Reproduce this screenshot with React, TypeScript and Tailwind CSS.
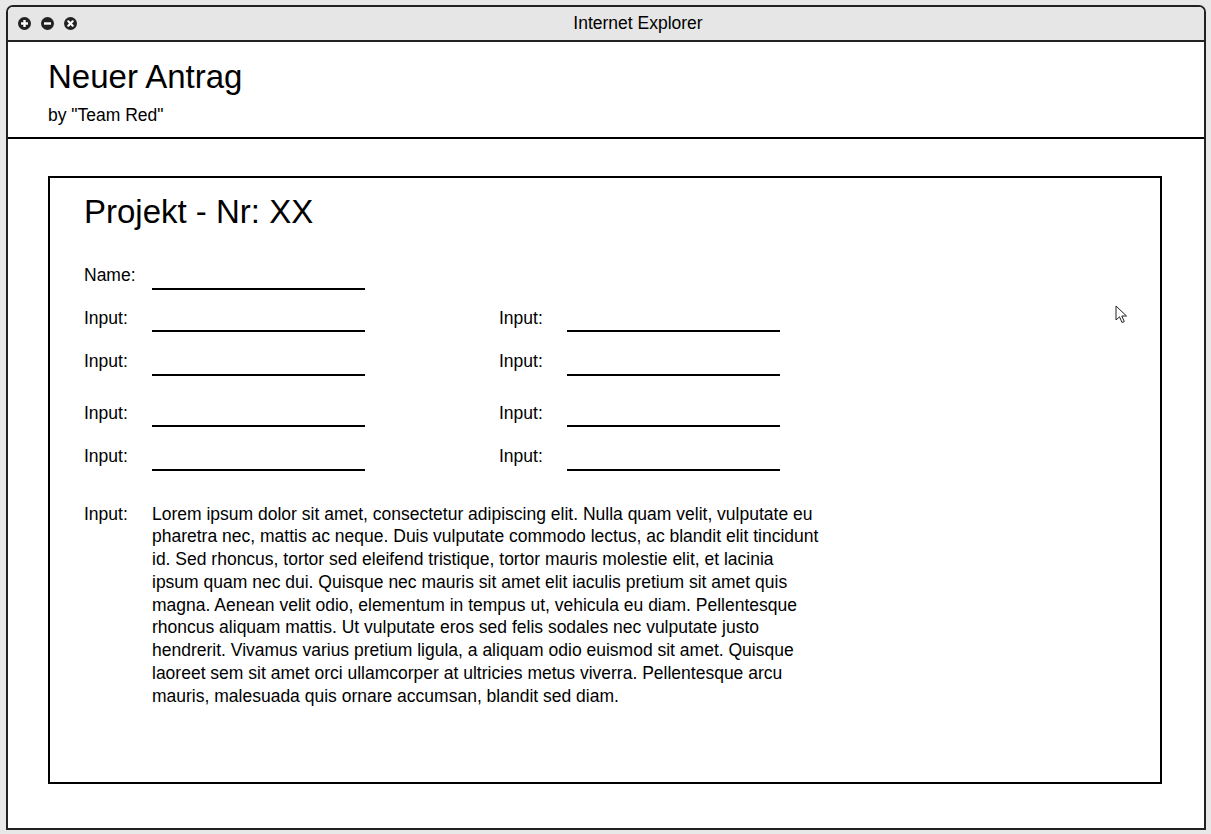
const lorem =
  'Lorem ipsum dolor sit amet, consectetur adipiscing elit. Nulla quam velit, vulputate eu pharetra nec, mattis ac neque. Duis vulputate commodo lectus, ac blandit elit tincidunt id. Sed rhoncus, tortor sed eleifend tristique, tortor mauris molestie elit, et lacinia ipsum quam nec dui. Quisque nec mauris sit amet elit iaculis pretium sit amet quis magna. Aenean velit odio, elementum in tempus ut, vehicula eu diam. Pellentesque rhoncus aliquam mattis. Ut vulputate eros sed felis sodales nec vulputate justo hendrerit. Vivamus varius pretium ligula, a aliquam odio euismod sit amet. Quisque laoreet sem sit amet orci ullamcorper at ultricies metus viverra. Pellentesque arcu mauris, malesuada quis ornare accumsan, blandit sed diam.';

function WinButton({ kind }: { kind: 'plus' | 'minus' | 'close' }) {
  return (
    <svg width="13" height="13" viewBox="0 0 13 13">
      <circle cx="6.5" cy="6.5" r="6.5" fill="#222" />
      {kind !== 'close' && <rect x="3" y="5.3" width="7" height="2.4" fill="#fff" />}
      {kind === 'plus' && <rect x="5.3" y="3" width="2.4" height="7" fill="#fff" />}
      {kind === 'close' && (
        <g stroke="#fff" strokeWidth="2.2" strokeLinecap="round">
          <line x1="4.3" y1="4.3" x2="8.7" y2="8.7" />
          <line x1="8.7" y1="4.3" x2="4.3" y2="8.7" />
        </g>
      )}
    </svg>
  );
}

function Field({ label }: { label: string }) {
  return (
    <div className="flex items-end w-[415px]">
      <span className="w-[68px] leading-none pb-[5px]">{label}</span>
      <div className="w-[213px] h-[2px] bg-black" />
    </div>
  );
}

export default function App() {
  return (
    <div className="min-h-[834px] bg-[#e8e8e8] pt-[5px] pl-[6px] font-['Liberation_Sans',Arial,sans-serif] text-black text-[17.5px]">
      <div className="relative w-[1200px] h-[825px] border-2 border-[#222] rounded-t-[7px] bg-white overflow-hidden">
        {/* title bar */}
        <div className="relative h-[35px] bg-[#e6e6e6] border-b-2 border-[#222] flex items-center">
          <div className="flex gap-[10px] pl-[10px]">
            <WinButton kind="plus" />
            <WinButton kind="minus" />
            <WinButton kind="close" />
          </div>
          <div className="absolute inset-0 pl-[64px] flex items-center justify-center">Internet Explorer</div>
        </div>

        {/* header */}
        <div className="h-[97px] border-b-2 border-black pl-[40px] pt-[18px]">
          <h1 className="text-[33px] leading-none">Neuer Antrag</h1>
          <p className="mt-[14px] leading-none">by "Team Red"</p>
        </div>

        {/* form box */}
        <div className="mt-[37px] ml-[40px] w-[1114px] h-[608px] border-2 border-black pl-[34px] pt-[17px]">
          <h2 className="text-[33px] leading-none">Projekt - Nr: XX</h2>

          <div className="mt-[39px] flex flex-col">
            <Field label="Name:" />
            <div className="flex mt-[20px]">
              <Field label="Input:" />
              <Field label="Input:" />
            </div>
            <div className="flex mt-[21px]">
              <Field label="Input:" />
              <Field label="Input:" />
            </div>
            <div className="flex mt-[29px]">
              <Field label="Input:" />
              <Field label="Input:" />
            </div>
            <div className="flex mt-[21px]">
              <Field label="Input:" />
              <Field label="Input:" />
            </div>
          </div>

          <div className="flex mt-[32px]">
            <span className="w-[68px] leading-[22.75px]">Input:</span>
            <p className="w-[672px] leading-[22.75px]">{lorem}</p>
          </div>
        </div>

        {/* mouse pointer */}
        <svg className="absolute left-[1107px] top-[298px]" width="14" height="20" viewBox="0 0 14 20">
          <path
            d="M1 1 L1 15 L4.5 11.8 L7 17.5 L9.3 16.5 L6.8 11 L11.5 11 Z"
            fill="#fff"
            stroke="#222"
            strokeWidth="1"
            strokeLinejoin="round"
          />
        </svg>
      </div>
    </div>
  );
}
